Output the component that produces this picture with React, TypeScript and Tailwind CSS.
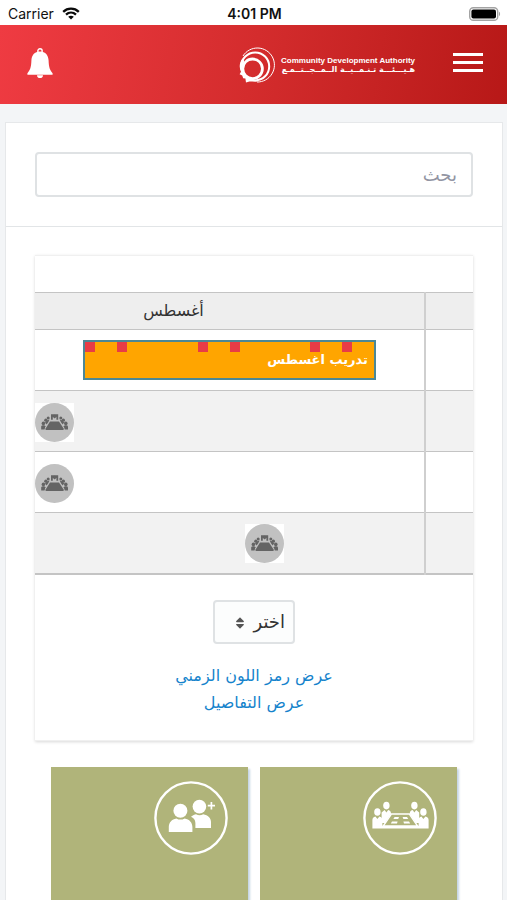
import { FaSort } from 'react-icons/fa';

const markers = [0, 11, 39, 50, 78, 89];

function WifiIcon() {
  return (
    <svg width="18" height="13" viewBox="0 0 18 13" fill="none" stroke="#0a0a0a" strokeWidth="2.3">
      <path d="M1.2 4.8C5.6 0.6 12.4 0.6 16.8 4.8" />
      <path d="M4 7.7C6.9 5 11.1 5 14 7.7" />
      <path d="M9 12.6L6.2 9.8C7.8 8.4 10.2 8.4 11.8 9.8Z" fill="#0a0a0a" stroke="none" />
    </svg>
  );
}

function BatteryIcon() {
  return (
    <svg width="32" height="14" viewBox="0 0 32 14">
      <rect x="0.7" y="0.7" width="28" height="12.6" rx="3.6" fill="#fff" stroke="#a3a3a3" strokeWidth="1.4" />
      <rect x="2.4" y="2.4" width="24.6" height="9.2" rx="2" fill="#000" />
      <path d="M30 4.8C31.4 5.3 31.4 8.7 30 9.2Z" fill="#a3a3a3" />
    </svg>
  );
}

function BellIcon() {
  return (
    <svg width="26" height="30" viewBox="0 0 26 30" fill="#fff">
      <circle cx="13" cy="3" r="2.2" fill="none" stroke="#fff" strokeWidth="1.4" />
      <path d="M13 3.4C18.6 3.4 21.4 7.2 21.6 12.6C21.8 19 22.8 22.4 25.6 25.2V26.8H0.4V25.2C3.2 22.4 4.2 19 4.4 12.6C4.6 7.2 7.4 3.4 13 3.4Z" />
      <path d="M10 27.2A3 2.8 0 0 0 16 27.2Z" />
    </svg>
  );
}

function LogoMark() {
  return (
    <svg width="36" height="36" viewBox="0 0 36 36" fill="none" stroke="#fff">
      <path d="M4 9A17 17 0 1 1 18 35" strokeWidth="1" />
      <circle cx="16.2" cy="19.4" r="14" strokeWidth="2" />
      <circle cx="13.6" cy="21.8" r="9.8" strokeWidth="2.8" />
      <path d="M3.4 11.4C0.2 16 0 20.6 2 24.8L0.6 27.2L3.2 28.4L4.2 31.2L6.4 31.6L7 35.4L10.4 34.4L19 34.6L13.4 32L9.6 30.8L6.6 28L4.6 24L3.8 19L5.4 14Z" fill="#fff" stroke="none" />
    </svg>
  );
}

function MeetingIcon() {
  return (
    <span className="block size-[39px] bg-white">
      <svg className="size-full" viewBox="0 0 39 39" fill="#646464">
        <circle cx="19.5" cy="19.5" r="19.5" fill="#c1c1c1" />
        <path d="M15 18.4H24L28.6 25.6V27H10.6V25.6Z" />
        <path d="M16 11.2H23.2V16.8H21.4V13.8L19.6 15.4L17.8 13.8V16.8H16Z" />
        <circle cx="19.6" cy="13.2" r="1.4" />
        <circle cx="13.2" cy="15" r="1.5" />
        <circle cx="10.8" cy="17.2" r="1.6" />
        <circle cx="8.4" cy="20.4" r="1.8" />
        <circle cx="25.8" cy="15" r="1.5" />
        <circle cx="28.4" cy="17.2" r="1.6" />
        <circle cx="30.8" cy="20.4" r="1.8" />
        <path d="M12.2 17.2L14.4 16.8L13.4 19L11.6 21.6L10 19.4Z" />
        <path d="M6.2 23.4C6.8 22 9.8 22 10.4 23.2L9.6 26.6H6.2Z" />
        <path d="M27 17.2L24.8 16.8L25.8 19L27.6 21.6L29.2 19.4Z" />
        <path d="M33 23.4C32.4 22 29.4 22 28.8 23.2L29.8 26.6H33Z" />
      </svg>
    </span>
  );
}

function PeopleIcon() {
  return (
    <svg className="size-[74px]" viewBox="0 0 74 74" fill="#fff">
      <circle cx="37" cy="37" r="35.6" fill="none" stroke="#fff" strokeWidth="2.4" />
      <circle cx="45.4" cy="25.6" r="6.8" />
      <path d="M37 35.8C39 34 40.6 33.4 42 33.2C44.4 34.6 46.8 34.6 49.2 33.2C54 34 57 37 57 41V47H41.4V42C41.4 39 39.4 36.8 37 35.8Z" />
      <circle cx="26.4" cy="29.8" r="7" />
      <path d="M22.4 37.4C25 39 28 39 30.6 37.4C35.4 38.2 38.4 41.4 38.4 46V51H14.8V46C14.8 41.4 17.8 38.2 22.4 37.4Z" />
      <path d="M57.4 21V28.4M53.8 24.7H61" stroke="#fff" strokeWidth="1.7" />
    </svg>
  );
}

function BoardroomIcon() {
  return (
    <svg className="size-[74px]" viewBox="0 0 74 74" fill="#fff">
      <circle cx="37" cy="37" r="35.6" fill="none" stroke="#fff" strokeWidth="2.4" />
      <ellipse cx="23.4" cy="24.6" rx="3.2" ry="3.8" />
      <ellipse cx="51.4" cy="24.6" rx="3.2" ry="3.8" />
      <path d="M18.6 31.4L21.6 29L23.4 31.6L25.2 29C27.2 29.4 28 30.4 28 33L22 42H18.6Z" />
      <path d="M56.2 31.4L53.2 29L51.4 31.6L49.6 29C47.6 29.4 46.8 30.4 46.8 33L52.8 42H56.2Z" />
      <ellipse cx="14.4" cy="31" rx="3.2" ry="3.8" />
      <ellipse cx="60.4" cy="31" rx="3.2" ry="3.8" />
      <path d="M9.4 39C9.4 37 10.4 36 12.4 35.4L14.4 38L16.4 35.4C18.4 36 19.4 37 19.4 39V44.8H55.6V39C55.6 37 56.6 36 58.4 35.4L60.4 38L62.4 35.4C64.6 36 65.6 37 65.6 39V47.4H9.4Z" />
      <path d="M28.4 33H46.4L54.6 45H20.2Z" fill="#b0b47a" stroke="#fff" strokeWidth="1.4" />
      <path d="M31.6 36H36L35.2 38H30.4ZM39.6 36H44L45.2 38H40.4ZM29 40.6H34.6L34 42.6H27.8ZM40.4 40.6H46L47.2 42.6H41Z" />
    </svg>
  );
}

export default function App() {
  return (
    <div dir="rtl" className="min-h-screen bg-[#f3f5f7] font-['DejaVu_Sans',sans-serif] text-[#333]">
      {/* Status bar */}
      <div dir="ltr" className="grid h-[25px] grid-cols-3 items-center bg-white pt-0.5 pl-2 pr-1.5 font-['Inter',sans-serif] text-sm text-[#111]">
        <div className="flex items-center gap-2">
          <span>Carrier</span>
          <WifiIcon />
        </div>
        <span className="text-center font-semibold">4:01 PM</span>
        <div className="flex justify-end">
          <BatteryIcon />
        </div>
      </div>

      {/* Header */}
      <header className="flex h-[79px] items-center bg-linear-100 from-[#ef3b42] via-[#d42c2d] to-[#b71817] ps-6 pe-[27px] pb-1">
        <button type="button" aria-label="القائمة" className="flex w-[30px] flex-col gap-[5px]">
          <span className="h-[3px] bg-white" />
          <span className="h-[3px] bg-white" />
          <span className="h-[3px] bg-white" />
        </button>
        <a href="#" dir="ltr" className="me-[38px] flex items-center gap-1.5 pt-1 text-white">
          <LogoMark />
          <span className="flex flex-col font-bold">
            <span className="font-['Liberation_Sans',sans-serif] text-[8px] leading-[9px]">Community Development Authority</span>
            <span dir="rtl" className="text-[8px] leading-[9px]">هـيـــئـــة تـنـمــيــة الــمــجــتــمـع</span>
          </span>
        </a>
        <button type="button" aria-label="الإشعارات" className="ms-auto">
          <BellIcon />
        </button>
      </header>

      <main className="ms-1 me-[5px] mt-[18px] border border-b-0 border-[#e6e8ea] bg-white">
        <div className="border-b border-[#e2e5e7] px-[29px] py-[29px]">
          <input
            type="text"
            aria-label="بحث"
            placeholder="بحث"
            className="block h-[45px] w-full rounded-sm border-2 border-[#dfe2e4] bg-white px-3.5 text-lg outline-none placeholder:text-[#9295a3]"
          />
        </div>

        <div className="px-[29px] pt-7">
          {/* Timeline */}
          <section className="border-y border-[#f0f0f0] pt-9 pb-6 shadow-[0_1px_3px_#d8d8d8]">
            <table className="w-full table-fixed border-collapse text-base">
              <thead>
                <tr className="h-[37px] border-y border-[#c4c4c4] bg-[#eeeeee]">
                  <td className="w-12 border-e-2 border-[#cfcfcf]" />
                  <th scope="col" className="ps-28 font-normal">أغسطس</th>
                </tr>
              </thead>
              <tbody>
                <tr className="h-[61px] border-b border-[#c4c4c4]">
                  <td className="border-e-2 border-[#cfcfcf]" />
                  <td className="px-12">
                    <div className="relative h-10 border-2 border-[#4c8795] bg-[#ffa500] px-1.5 text-[13px] leading-9 font-bold text-white">
                      تدريب اغسطس
                      {markers.map((left) => (
                        <span key={left} className="absolute top-0 size-2.5 bg-[#e83c46]" style={{ left: `${left}%` }} />
                      ))}
                    </div>
                  </td>
                </tr>
                <tr className="h-[61px] border-b border-[#c4c4c4] bg-[#f2f2f2]">
                  <td className="border-e-2 border-[#cfcfcf]" />
                  <td>
                    <div className="flex justify-end pt-0.5">
                      <MeetingIcon />
                    </div>
                  </td>
                </tr>
                <tr className="h-[61px] border-b border-[#c4c4c4]">
                  <td className="border-e-2 border-[#cfcfcf]" />
                  <td>
                    <div className="flex justify-end pt-0.5">
                      <MeetingIcon />
                    </div>
                  </td>
                </tr>
                <tr className="h-[61px] border-b-2 border-[#c4c4c4] bg-[#f2f2f2]">
                  <td className="border-e-2 border-[#cfcfcf]" />
                  <td>
                    <div className="flex justify-end pt-0.5 pe-[210px]">
                      <MeetingIcon />
                    </div>
                  </td>
                </tr>
              </tbody>
            </table>

            <div className="mt-[25px] flex flex-col items-center">
              <div className="relative">
                <select aria-label="اختر" className="h-11 w-[82px] appearance-none rounded-sm border-2 border-[#dfe2e4] bg-[#fcfdfd] ps-2 text-lg">
                  <option>اختر</option>
                </select>
                <FaSort className="pointer-events-none absolute top-4 left-5 text-sm text-[#555]" />
              </div>
              <a href="#" className="mt-[18px] leading-[27px] text-[#1583cc]">عرض رمز اللون الزمني</a>
              <a href="#" className="leading-[27px] text-[#1583cc]">عرض التفاصيل</a>
            </div>
          </section>

          {/* Shortcuts */}
          <div className="mt-[26px] grid grid-cols-2 gap-3 px-4">
            <a href="#" aria-label="الاجتماعات" className="block h-[133px] bg-[#b0b47a] ps-5 pt-3.5 shadow-[2px_2px_2px_#c5d5e4]">
              <BoardroomIcon />
            </a>
            <a href="#" aria-label="إضافة أعضاء" className="block h-[133px] bg-[#b0b47a] ps-5 pt-3.5 shadow-[2px_2px_2px_#c5d5e4]">
              <PeopleIcon />
            </a>
          </div>
        </div>
      </main>
    </div>
  );
}
